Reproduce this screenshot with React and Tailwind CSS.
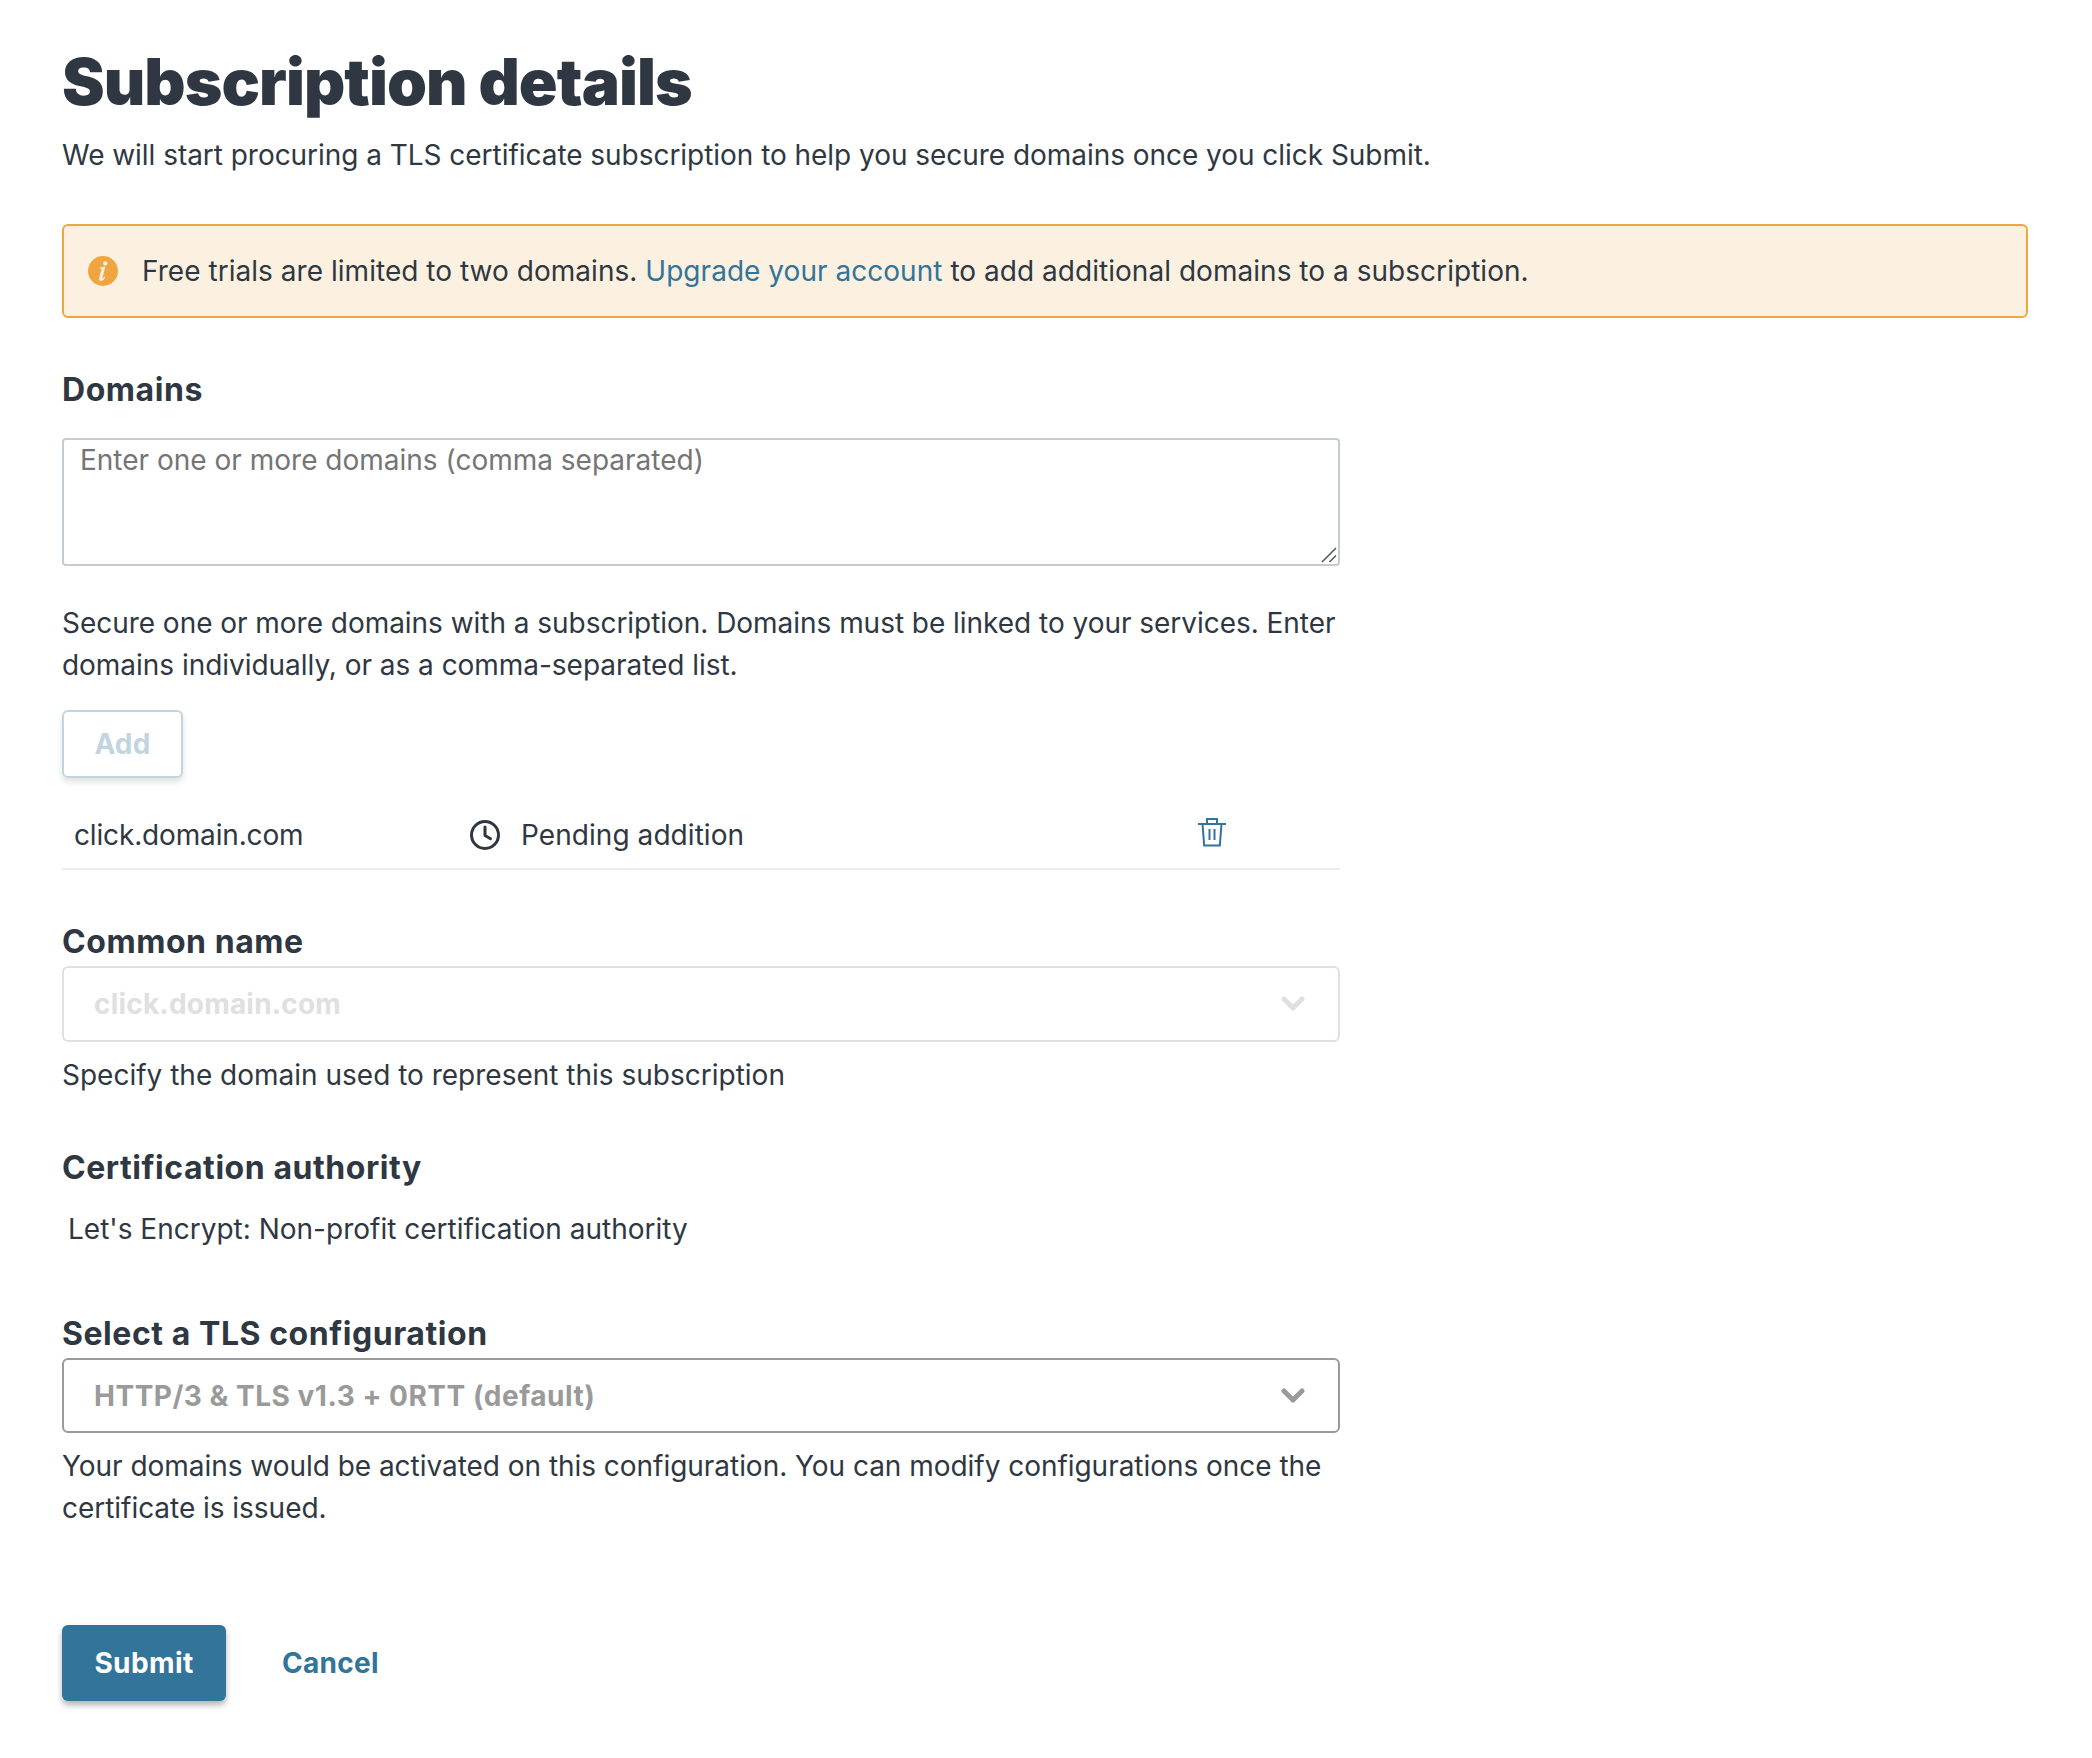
const ink = "text-[#2f3842]";

function Label({ className, children }) {
  return (
    <h2 className={`h-12 w-fit whitespace-nowrap text-[32px] leading-[50px] font-bold tracking-[0.55px] ${className}`}>
      {children}
    </h2>
  );
}

function Select({ className, children }) {
  return (
    <button className={`flex w-full items-center justify-between rounded-md border-2 pr-[33px] pl-[30px] text-[28px] font-bold ${className}`}>
      <span className="whitespace-nowrap">{children}</span>
      <svg className="h-4 w-6" viewBox="0 0 24 16" fill="none" stroke="currentColor" strokeWidth="5" strokeLinecap="round" strokeLinejoin="round">
        <path d="M3 3l9 9 9-9" />
      </svg>
    </button>
  );
}

export default function App() {
  return (
    <main className={`min-h-[1758px] bg-white pt-[43px] pr-16 pl-[62px] font-['Inter',sans-serif] text-[28px] leading-[42px] ${ink}`}>
      <h1 className="w-fit text-[64px] leading-[77px] font-black tracking-[-0.93px]">Subscription details</h1>
      <p className="mt-[14px] w-fit tracking-[-0.04px]">We will start procuring a TLS certificate subscription to help you secure domains once you click Submit.</p>

      <div className="mt-12 flex h-[94px] items-center rounded-md border-2 border-[#f0a640] bg-[#fcf1e0] pl-6">
        <svg className="h-[30px] w-[30px] shrink-0" viewBox="0 0 30 30">
          <circle cx="15" cy="15" r="15" fill="#f0a640" />
          <circle cx="17.3" cy="7.400" r="2.100" fill="#fcf1e0" />
          <path d="M11.800 11.600c2.200-.3 3.700-.7 5.600-1.300l-2.900 11.400c-.3 1.200.2 1.200 2-1.100l.8.600c-1.500 2.500-2.900 3.700-4.500 3.700-1.600 0-2-1.200-1.600-2.800l2.100-8.200c.2-1-.1-1.300-1.600-1.400z" fill="#fcf1e0" />
        </svg>
        <p className="ml-6 whitespace-nowrap tracking-[0.035px]">
          Free trials are limited to two domains. <a className="text-[#32749a]">Upgrade your account</a> to add additional domains to a subscription.
        </p>
      </div>

      <form className="w-[1278px]">
        <Label className="mt-[47px]">Domains</Label>
        <div className="relative mt-[25px] h-32 rounded-[4px] border-2 border-[#c6cbd0] pl-4">
          <p className="w-fit leading-[40px] text-[#757575]">Enter one or more domains (comma separated)</p>
          <svg className="absolute right-[1px] bottom-[1px] h-4 w-4" viewBox="0 0 16 16" fill="none" stroke="#555" strokeWidth="1.5">
            <path d="M1 15L15 1M8.500 15L15 8.500" />
          </svg>
        </div>
        <p className="mt-9 tracking-[-0.035px]">
          Secure one or more domains with a subscription. Domains must be linked to your services. Enter
          <br />
          domains individually, or as a comma-separated list.
        </p>
        <button className="mt-6 flex h-[68px] w-[121px] items-center justify-center rounded-md border-2 border-[#c1d5e1] font-bold tracking-[0.2px] text-[#c1d5e1] shadow-[0_4px_6px_rgba(0,0,0,0.12)]">Add</button>

        <div className="mt-6 flex h-[68px] items-center border-b-2 border-[#e9edf0] pl-3">
          <span className="w-[396px] tracking-[-0.15px]">click.domain.com</span>
          <svg className="h-[30px] w-[30px]" viewBox="0 0 30 30" fill="none" stroke="currentColor" strokeWidth="3" strokeLinecap="round" strokeLinejoin="round">
            <circle cx="15" cy="15" r="13.500" />
            <path d="M15 7v8.500l5.500 3.200" />
          </svg>
          <span className="ml-[21px] w-[677px] tracking-[0.06px]">Pending addition</span>
          <svg className="mb-[6px] h-[30px] w-7" viewBox="0 0 28 30" fill="none" stroke="#32749a" strokeWidth="2">
            <path d="M0 7h28M9 7V2h10v5M4.500 7l1.700 21.500h15.600L23.500 7M11.500 12v11M16.500 12v11" />
          </svg>
        </div>

        <Label className="mt-[47px]">Common name</Label>
        <Select className="mt-px h-[76px] border-[#e0e0e0] tracking-[0.2px] text-[#e0e0e0]">click.domain.com</Select>
        <p className="mt-3">Specify the domain used to represent this subscription</p>

        <Label className="mt-[47px]">Certification authority</Label>
        <p className="mt-[17px] pl-[6px]">Let's Encrypt: Non-profit certification authority</p>

        <Label className="mt-[59px]">Select a TLS configuration</Label>
        <Select className="mt-px h-[75px] border-[#9a9a9a] tracking-[0.51px] text-[#9a9a9a]">HTTP/3 &amp; TLS v1.3 + 0RTT (default)</Select>
        <p className="mt-3 tracking-[-0.035px]">
          Your domains would be activated on this configuration. You can modify configurations once the
          <br />
          certificate is issued.
        </p>

        <div className="mt-24 flex h-[76px] items-center">
          <button className="flex h-[76px] w-[164px] items-center justify-center rounded-md bg-[#32749a] font-bold tracking-[0.4px] text-white shadow-[0_4px_6px_rgba(0,0,0,0.3)]">Submit</button>
          <button className="ml-14 font-bold tracking-[0.3px] text-[#32749a]">Cancel</button>
        </div>
      </form>
    </main>
  );
}
